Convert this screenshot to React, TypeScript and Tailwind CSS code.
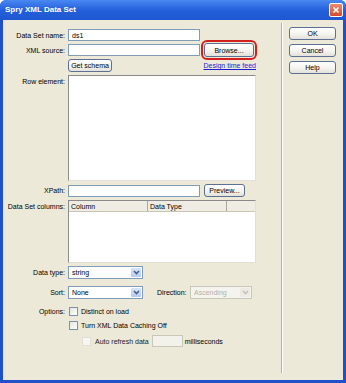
import type { ReactNode } from "react";

const FONT = "font-['Liberation_Sans',Arial,sans-serif]";

function Btn({ children, className = "" }: { children: ReactNode; className?: string }) {
  return (
    <div
      className={`flex items-center justify-center rounded-[3px] border border-[#5d7093] bg-linear-to-b from-white via-[#f6f5f1] to-[#e3e1d8] text-[7px] leading-none text-black ${className}`}
    >
      {children}
    </div>
  );
}

function Label({ children, top = false }: { children: ReactNode; top?: boolean }) {
  return (
    <div className={`w-[62px] shrink-0 text-right text-[7px] leading-none text-black ${top ? "self-start pt-[3px]" : ""}`}>
      {children}
    </div>
  );
}

function Input({ w, value = "", disabled = false }: { w: string; value?: string; disabled?: boolean }) {
  return (
    <div
      className={`${w} flex h-[12px] items-center border pl-[3px] text-[7px] leading-none ${
        disabled ? "border-[#c9c7ba] bg-[#f2f1ea]" : "border-[#7f9db9] bg-white"
      }`}
    >
      {value}
    </div>
  );
}

function Chevron({ color }: { color: string }) {
  return (
    <svg width="7" height="5" viewBox="0 0 7 5">
      <path d="M1 1 L3.5 3.5 L6 1" fill="none" stroke={color} strokeWidth="1.6" />
    </svg>
  );
}

function Select({ w, value, disabled = false }: { w: string; value: string; disabled?: boolean }) {
  return (
    <div
      className={`${w} flex h-[13px] items-center justify-between border p-[1px] ${
        disabled ? "border-[#c9c7ba] bg-[#f4f3ee]" : "border-[#7f9db9] bg-white"
      }`}
    >
      <span className={`pl-[2px] text-[7px] leading-none ${disabled ? "text-[#b5b2a3]" : "text-black"}`}>{value}</span>
      <div
        className={`flex h-full w-[10px] items-center justify-center rounded-[1px] ${
          disabled ? "bg-[#eceae2]" : "bg-linear-to-b from-[#d8e4fc] to-[#b4c9f4]"
        }`}
      >
        <Chevron color={disabled ? "#c4c1b2" : "#4d6185"} />
      </div>
    </div>
  );
}

function Check({ disabled = false }: { disabled?: boolean }) {
  return (
    <div
      className={`size-[9px] shrink-0 border ${
        disabled ? "border-[#e2e0d6] bg-[#f7f6f1]" : "border-[#7b92ad] bg-linear-to-br from-[#e4e3dc] to-white"
      }`}
    />
  );
}

export default function App() {
  return (
    <div className={`${FONT} flex h-[383px] w-[346px] flex-col overflow-hidden rounded-t-[6px] bg-[#1f50c9]`}>
      {/* title bar */}
      <div className="flex h-[20px] shrink-0 items-center justify-between bg-linear-to-b from-[#4a88f2] via-[#2460dc] to-[#1f56d0] pl-[5px] pr-[3px]">
        <span className="text-[8px] font-bold leading-none text-white">Spry XML Data Set</span>
        <div className="flex size-[14px] items-center justify-center rounded-[2px] border border-white bg-linear-to-b from-[#ec8a6c] to-[#d5482a]">
          <svg width="8" height="8" viewBox="0 0 8 8">
            <path d="M1.5 1.5 L6.5 6.5 M6.5 1.5 L1.5 6.5" stroke="white" strokeWidth="1.6" />
          </svg>
        </div>
      </div>

      <div className="mx-[3px] mb-[3px] flex flex-1 bg-[#ece9d8]">
        {/* form */}
        <div className="flex w-[278px] shrink-0 flex-col">
          <div className="mt-[9px] flex h-[12px] items-center gap-[3px]">
            <Label>Data Set name:</Label>
            <Input w="w-[132px]" value="ds1" />
          </div>

          <div className="mt-[2px] flex h-[14px] items-center gap-[3px]">
            <Label>XML source:</Label>
            <Input w="w-[132px]" />
            <Btn className="ml-[1px] h-[14px] w-[50px] outline-2 outline-offset-[1px] outline-[#d3201f]">Browse...</Btn>
          </div>

          <div className="mt-[2px] flex h-[13px] items-center">
            <div className="w-[65px] shrink-0" />
            <div className="flex w-[188px] items-center justify-between">
              <Btn className="h-[13px] w-[44px]">Get schema</Btn>
              <span className="text-[7px] leading-none text-[#1d1dd6] underline">Design time feed</span>
            </div>
          </div>

          <div className="mt-[3px] flex h-[106px] gap-[3px]">
            <Label top>Row element:</Label>
            <div className="h-[106px] w-[188px] border border-t-[#8a8a8a] border-l-[#8a8a8a] border-b-[#e2e0d6] border-r-[#e2e0d6] bg-white" />
          </div>

          <div className="mt-[3px] flex h-[13px] items-center gap-[3px]">
            <Label>XPath:</Label>
            <Input w="w-[132px]" />
            <Btn className="ml-[1px] h-[13px] w-[41px]">Preview...</Btn>
          </div>

          <div className="mt-[3px] flex h-[63px] gap-[3px]">
            <Label top>Data Set columns:</Label>
            <div className="flex h-[63px] w-[188px] flex-col border border-t-[#8a8a8a] border-l-[#8a8a8a] border-b-[#e2e0d6] border-r-[#e2e0d6] bg-white">
              <div className="flex h-[11px] border-b border-[#c9c6b6] bg-[#efede3] text-[7px] leading-none text-black">
                <div className="flex w-[79px] items-center border-r border-[#aca899] pl-[2px]">Column</div>
                <div className="flex w-[79px] items-center border-r border-[#aca899] pl-[2px]">Data Type</div>
                <div className="flex-1" />
              </div>
            </div>
          </div>

          <div className="mt-[3px] flex h-[13px] items-center gap-[3px]">
            <Label>Data type:</Label>
            <Select w="w-[75px]" value="string" />
          </div>

          <div className="mt-[7px] flex h-[13px] items-center gap-[3px]">
            <Label>Sort:</Label>
            <Select w="w-[75px]" value="None" />
            <span className="ml-[11px] w-[30px] text-[7px] leading-none text-black">Direction:</span>
            <Select w="w-[62px]" value="Ascending" disabled />
          </div>

          <div className="mt-[7px] flex h-[11px] items-center gap-[3px]">
            <Label>Options:</Label>
            <div className="ml-[1px] flex items-center gap-[3px]">
              <Check />
              <span className="text-[7px] leading-none text-black">Distinct on load</span>
            </div>
          </div>

          <div className="mt-[3px] flex h-[11px] items-center">
            <div className="w-[66px] shrink-0" />
            <div className="flex items-center gap-[3px]">
              <Check />
              <span className="text-[7px] leading-none text-black">Turn XML Data Caching Off</span>
            </div>
          </div>

          <div className="mt-[4px] flex h-[12px] items-center">
            <div className="w-[79px] shrink-0" />
            <Check disabled />
            <span className="ml-[4px] text-[7px] leading-none text-[#222]">Auto refresh data</span>
            <div className="ml-[3px]">
              <Input w="w-[31px]" disabled />
            </div>
            <span className="ml-[2px] text-[7px] leading-none text-black">milliseconds</span>
          </div>
        </div>

        {/* separator */}
        <div className="mb-[7px] mt-[3px] w-[2px] shrink-0 border-l border-r border-l-[#b4b1a2] border-r-white" />

        {/* buttons */}
        <div className="flex flex-col gap-[4px] pl-[6px] pt-[7px]">
          <Btn className="h-[13px] w-[47px]">OK</Btn>
          <Btn className="h-[13px] w-[47px]">Cancel</Btn>
          <Btn className="h-[13px] w-[47px]">Help</Btn>
        </div>
      </div>
    </div>
  );
}
